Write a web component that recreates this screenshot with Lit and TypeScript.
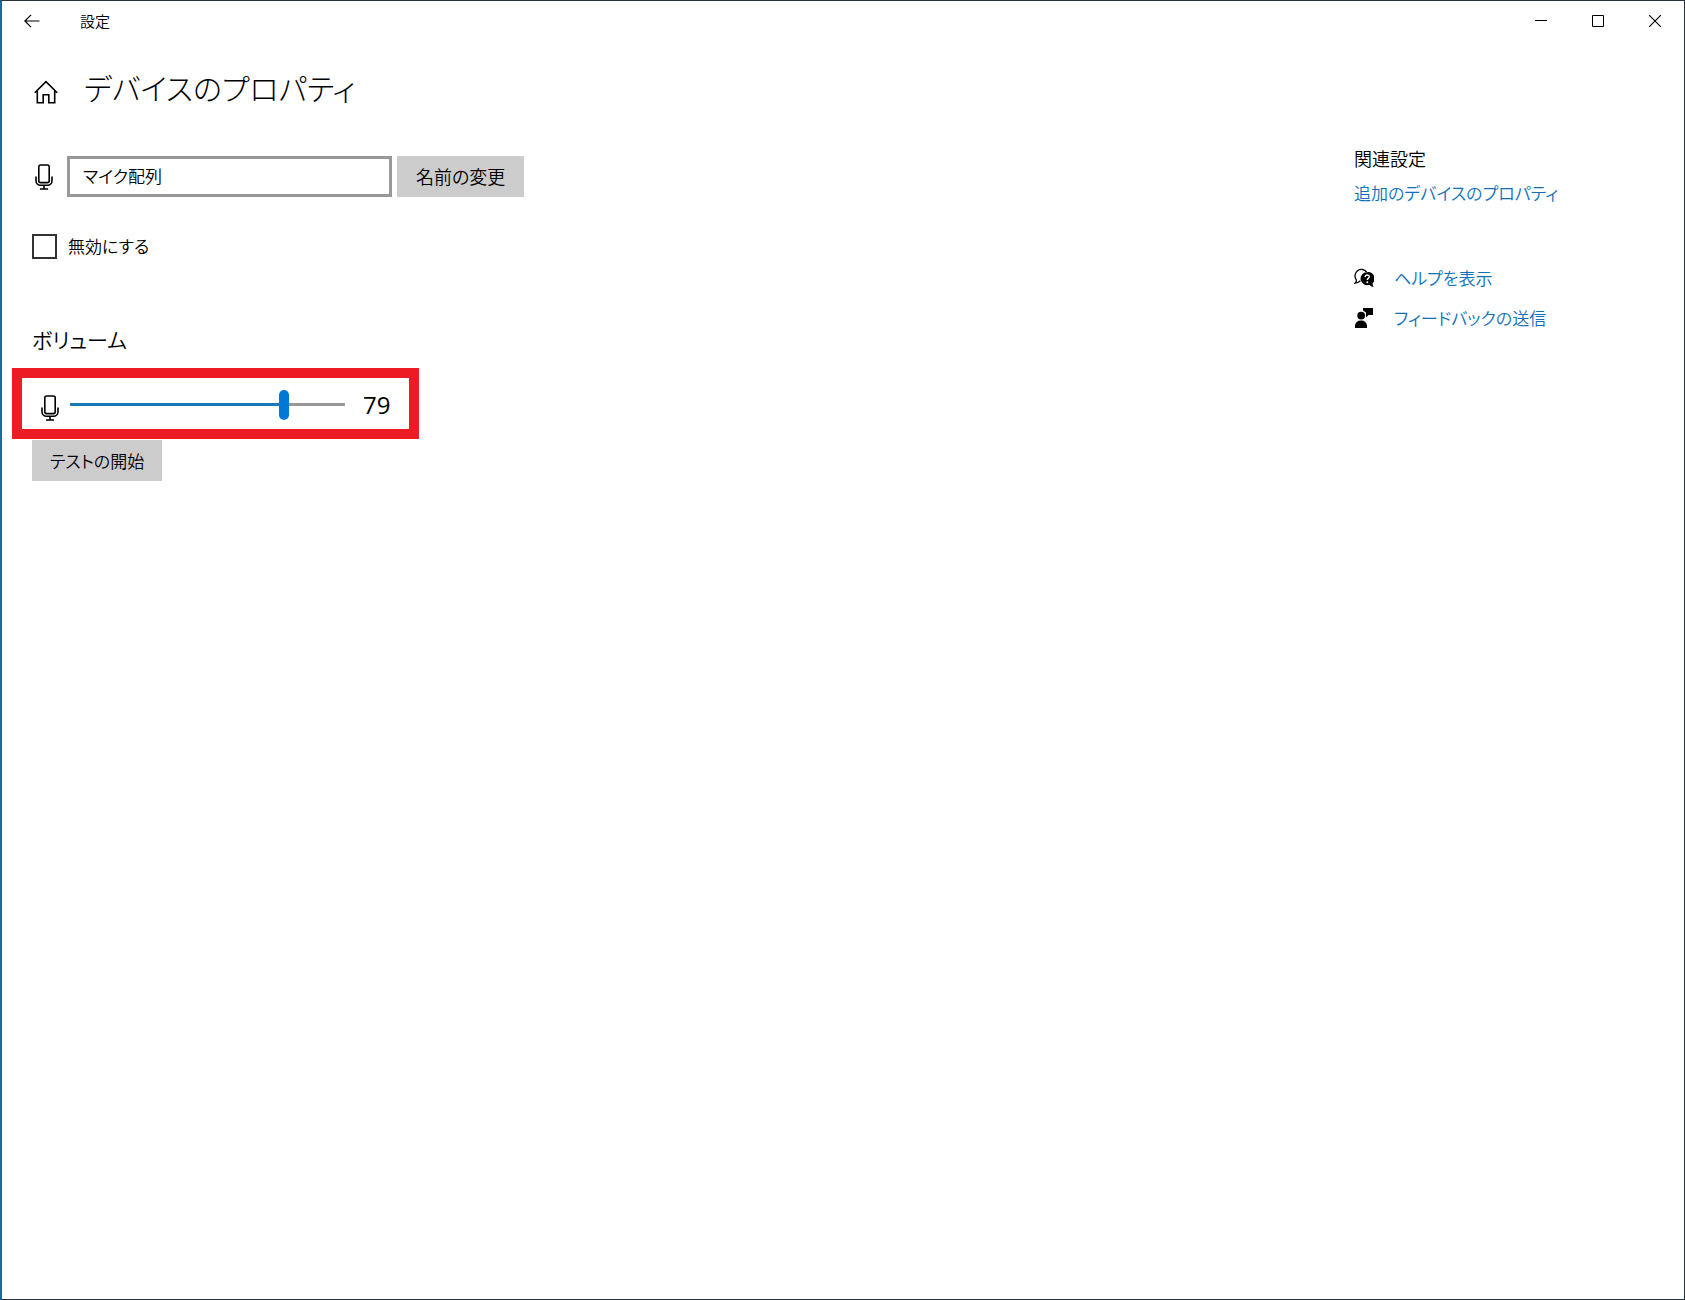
import { LitElement, html, css, svg } from "lit";
import { customElement, property, state } from "lit/decorators.js";

const microphone = svg`
  <svg class="mic" viewBox="0 0 18 26" width="18" height="26" fill="none" stroke="#000" stroke-width="1.6" aria-hidden="true">
    <rect x="3.8" y="1" width="10.4" height="17.6" rx="1.8"></rect>
    <path d="M1 12.5v4.2a4.6 4.6 0 0 0 4.6 4.6h6.8a4.6 4.6 0 0 0 4.6-4.6v-4.2M9 21.3v3.6M5 25h8"></path>
  </svg>`;

@customElement("title-bar")
export class TitleBar extends LitElement {
  @property() label = "";

  static styles = css`
    :host {
      display: flex;
      align-items: stretch;
      height: 40px;
      padding: 0 1px;
    }
    .button {
      display: grid;
      place-items: center;
      width: 57px;
      padding: 0;
      border: 0;
      background: none;
    }
    .button:hover {
      background: #e5e5e5;
    }
    .label {
      flex: 1;
      padding-left: 20px;
      font-size: 15px;
      line-height: 40px;
    }
    svg {
      display: block;
    }
  `;

  render() {
    return html`
      <button class="button" aria-label="戻る">
        <svg width="16" height="14" viewBox="0 0 16 14" fill="none" stroke="#000" stroke-width="1.2">
          <path d="M15.5 7H1M7 .8L.9 7 7 13.2"></path>
        </svg>
      </button>
      <span class="label">${this.label}</span>
      <button class="button" aria-label="最小化">
        <svg width="12" height="12" viewBox="0 0 12 12" stroke="#000"><path d="M0 5.5h12"></path></svg>
      </button>
      <button class="button" aria-label="最大化">
        <svg width="12" height="12" viewBox="0 0 12 12" fill="none" stroke="#000"><path d="M.5.5h11v11H.5z"></path></svg>
      </button>
      <button class="button" aria-label="閉じる">
        <svg width="12" height="12" viewBox="0 0 12 12" stroke="#000" stroke-width="1.1"><path d="M0 0l12 12M12 0L0 12"></path></svg>
      </button>
    `;
  }
}

@customElement("related-links")
export class RelatedLinks extends LitElement {
  static styles = css`
    :host {
      display: block;
      line-height: 24px;
    }
    .title {
      margin: 0 0 11px;
      font-size: 18px;
      font-weight: inherit;
    }
    .link {
      color: #0f6fb8;
      text-decoration: none;
    }
    .link:hover {
      color: #666;
    }
    .support {
      display: grid;
      gap: 16px;
      margin: 61px 0 0;
      padding: 0;
      list-style: none;
    }
    .item {
      display: flex;
      align-items: center;
      gap: 20px;
    }
    .icon {
      flex: none;
    }
  `;

  render() {
    return html`
      <h2 class="title">関連設定</h2>
      <a class="link" href="#properties">追加のデバイスのプロパティ</a>
      <ul class="support">
        <li class="item">
          <svg class="icon" width="20" height="20" viewBox="0 0 20 20" aria-hidden="true">
            <path d="M6.4 12.6c-1 1.4-2.8 2.2-5.2 2.5 1-.9 1.3-2 1.1-3.3A6 6 0 1 1 12.6 4" fill="none" stroke="#000" stroke-width="1.3"></path>
            <path d="M13 4.2a6.5 6.5 0 1 0 2.3 12.6c1.1 1.1 2.5 1.9 4.3 2.3-.8-1.3-1.1-2.6-.9-3.9A6.5 6.5 0 0 0 13 4.2z" fill="#000"></path>
            <path d="M11.2 9c0-2.6 4.1-2.5 4.1-.2 0 1.6-2 1.6-2 3.3" fill="none" stroke="#fff" stroke-width="1.4"></path>
            <circle cx="13.3" cy="14.3" r="1" fill="#fff"></circle>
          </svg>
          <a class="link" href="#help">ヘルプを表示</a>
        </li>
        <li class="item">
          <svg class="icon" width="20" height="20" viewBox="0 0 20 20" aria-hidden="true">
            <circle cx="7.2" cy="7.6" r="3.9"></circle>
            <path d="M1 20v-2.5A5.5 5.5 0 0 1 6.5 12.5h1A5.5 5.5 0 0 1 13 17.5V20zM9 0h10v7h-4.5L12 9.5V4.5L9 2.5z"></path>
          </svg>
          <a class="link" href="#feedback">フィードバックの送信</a>
        </li>
      </ul>
    `;
  }
}

@customElement("volume-slider")
export class VolumeSlider extends LitElement {
  @property({ type: Number }) value = 0;

  static styles = css`
    :host {
      display: flex;
      align-items: center;
      box-sizing: border-box;
      width: 407px;
      height: 71px;
      padding: 2px 0 0 19px;
      border: 10px solid #ed1c24;
    }
    .mic {
      flex: none;
      margin-top: 6px;
    }
    .range {
      appearance: none;
      width: 275px;
      height: 30px;
      margin: 0 18px 0 11px;
      background: linear-gradient(#1a78bd, #1a78bd) 0 center / var(--filled) 3px no-repeat,
        linear-gradient(#999, #999) 0 center / 100% 3px no-repeat;
    }
    .range::-webkit-slider-thumb {
      appearance: none;
      width: 10px;
      height: 30px;
      border-radius: 5px;
      background: #0078d7;
    }
    .value {
      font-family: "Open Sans", "Noto Sans CJK JP", sans-serif;
      font-size: 24px;
      font-weight: 400;
      line-height: 32px;
    }
  `;

  private onInput(event: Event) {
    this.value = Number((event.target as HTMLInputElement).value);
  }

  render() {
    return html`
      ${microphone}
      <input
        class="range"
        id="volume"
        type="range"
        min="0"
        max="100"
        aria-label="ボリューム"
        style="--filled: ${this.value}%"
        .value=${String(this.value)}
        @input=${this.onInput}
      />
      <output class="value" for="volume">${this.value}</output>
    `;
  }
}

@customElement("app-root")
export class AppRoot extends LitElement {
  @state() private deviceName = "マイク配列";

  static styles = css`
    :host {
      display: block;
      box-sizing: border-box;
      min-height: 100vh;
      border: 1px solid #27323f;
      border-left: 2px solid #116c9f;
      background: #fff;
      color: #000;
      font-family: "Noto Sans CJK JP", sans-serif;
      font-size: 17px;
      font-weight: 350;
      font-feature-settings: "palt";
    }
    .header {
      display: flex;
      align-items: center;
      gap: 26px;
      padding: 22px 32px 0;
    }
    .home {
      display: block;
      margin-top: 10px;
    }
    .heading {
      margin: 0;
      font-size: 30px;
      font-weight: 300;
      line-height: 48px;
    }
    .content {
      display: grid;
      grid-template-columns: 1fr 330px;
    }
    .settings {
      padding: 45px 30px 0;
    }
    .device {
      display: flex;
      align-items: center;
      gap: 5px;
    }
    .mic {
      flex: none;
      margin: 0 9px 0 3px;
    }
    .name {
      box-sizing: border-box;
      width: 325px;
      height: 41px;
      padding: 0 13px 2px;
      border: 3px solid #999;
      border-radius: 0;
      background: #fff;
      color: inherit;
      font: inherit;
      font-feature-settings: inherit;
    }
    .button {
      height: 41px;
      padding: 0 18px;
      border: 0;
      background: #ccc;
      color: inherit;
      font: inherit;
      font-feature-settings: inherit;
    }
    .rename {
      padding: 0 19px 2px;
      font-size: 18px;
    }
    .disable {
      display: flex;
      align-items: flex-start;
      gap: 11px;
      width: max-content;
      margin-top: 37px;
      line-height: 24px;
    }
    .checkbox {
      appearance: none;
      box-sizing: border-box;
      width: 25px;
      height: 25px;
      margin: 0;
      border: 2px solid #333;
    }
    .checkbox:checked {
      background: #0078d7;
    }
    .section {
      margin: 64px 0 13px;
      font-size: 21px;
      font-weight: inherit;
      line-height: 32px;
    }
    .volume {
      margin: 0 0 1px -20px;
    }
    .related {
      padding-top: 35px;
    }
  `;

  render() {
    return html`
      <title-bar label="設定"></title-bar>
      <header class="header">
        <svg class="home" width="24" height="24" viewBox="0 0 24 24" fill="none" stroke="#000" stroke-width="1.6" aria-hidden="true">
          <path d="M.8 12.7L12 1.6l11.2 11.1M3.3 10.5v12.2h5.9v-8h5.6v8h5.9V10.5"></path>
        </svg>
        <h1 class="heading">デバイスのプロパティ</h1>
      </header>
      <div class="content">
        <main class="settings">
          <div class="device">
            ${microphone}
            <input class="name" type="text" aria-label="デバイス名" .value=${this.deviceName} />
            <button class="button rename">名前の変更</button>
          </div>
          <label class="disable"><input class="checkbox" type="checkbox" />無効にする</label>
          <h2 class="section">ボリューム</h2>
          <volume-slider class="volume" value="79"></volume-slider>
          <button class="button">テストの開始</button>
        </main>
        <aside class="related"><related-links></related-links></aside>
      </div>
    `;
  }
}
